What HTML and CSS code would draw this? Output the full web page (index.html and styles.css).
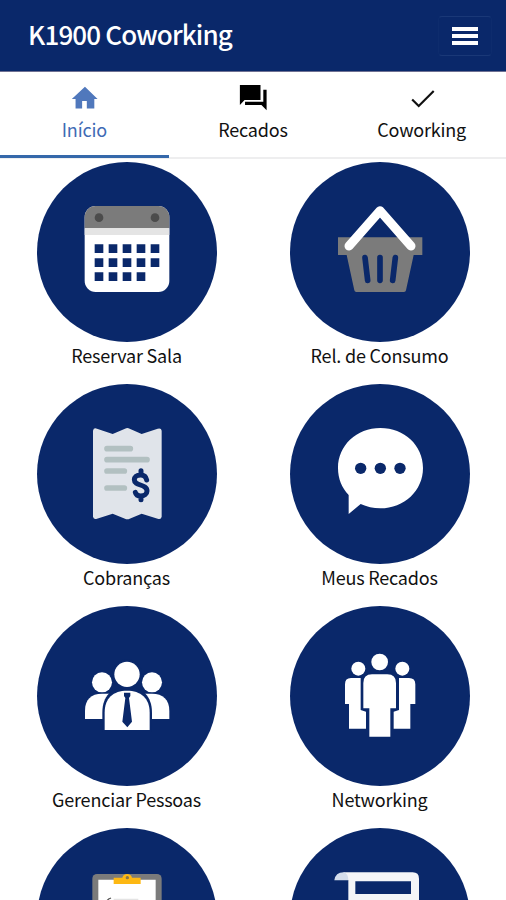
FILE: index.html
```html
<!DOCTYPE html>
<html lang="pt-BR">
<head>
<meta charset="utf-8">
<title>K1900 Coworking</title>
<link rel="stylesheet" href="styles.css">
</head>
<body>
<header class="topbar">
  <h1 class="title">K1900 Coworking</h1>
  <button class="menu" aria-label="Menu"><span class="bar"></span><span class="bar"></span><span class="bar"></span></button>
</header>
<nav class="tabs">
  <a class="tab active">
    <svg class="tab-icon" viewBox="0 0 32 32"><path fill="#5078bc" d="M14 26v-8h5v8h8V16h3.500L17 3 3 16H7v10z"/></svg>
    <span class="tab-label">Início</span>
  </a>
  <a class="tab">
    <svg class="tab-icon" viewBox="0 0 32 32"><path d="M2 1h22v16H7l-5 5.500zM27 6h3.500v22L25 22.500H7.500V19H27z"/></svg>
    <span class="tab-label">Recados</span>
  </a>
  <a class="tab">
    <svg class="tab-icon" viewBox="0 0 32 32"><path d="M5.500 16.500l7 7L28.500 7.500" fill="none" stroke="#111" stroke-width="2.300"/></svg>
    <span class="tab-label">Coworking</span>
  </a>
</nav>
<main class="grid">
  <a class="tile">
    <svg class="disc" viewBox="0 0 180 180"><g transform="translate(-7 -7) scale(.33333)">
      <rect x="164" y="153" width="254" height="258" rx="33" fill="#fff"/>
      <path d="M164 220v-34a33 33 0 0 1 33-33h188a33 33 0 0 1 33 33v34z" fill="#7b7b7b"/>
      <path d="M164 220h254v20H164z" fill="#e4e4e4"/>
      <circle cx="207" cy="188" r="13" fill="#4c4c4c"/><circle cx="375" cy="188" r="13" fill="#4c4c4c"/>
      <path fill="#0a286a" d="M194 268h26v26h-26zM236 268h26v26h-26zM278 268h26v26h-26zM320 268h26v26h-26zM362 268h26v26h-26zM194 310h26v26h-26zM236 310h26v26h-26zM278 310h26v26h-26zM320 310h26v26h-26zM362 310h26v26h-26zM194 352h26v26h-26zM236 352h26v26h-26zM278 352h26v26h-26zM320 352h26v26h-26z"/>
    </g></svg>
    <span class="label">Reservar Sala</span>
  </a>
  <a class="tile">
    <svg class="disc" viewBox="0 0 180 180"><g transform="translate(-10 -7) scale(.33333)">
      <path d="M174 247h253v53h-26l-23 106q-1 5-6 5H229q-5 0-6-5L200 300h-26z" fill="#7b7b7b"/>
      <path d="M255 308l8 68M300 308v68M346 308l-8 68" stroke="#0a286a" stroke-width="17" stroke-linecap="round"/>
      <path d="M207 273l93-106 93 106" fill="none" stroke="#fff" stroke-width="27" stroke-linecap="round" stroke-linejoin="round"/>
    </g></svg>
    <span class="label">Rel. de Consumo</span>
  </a>
  <a class="tile">
    <svg class="disc" viewBox="0 0 180 180"><g transform="translate(-7 -4) scale(.33333)">
      <path d="M189 152q2-10 12-6l47 16 37-16q7-4 14 0l36 16 48-16q11-3 12 6v258q-2 10-12 6l-48-15-36 15q-7 4-14 0l-37-15-47 15q-10 3-12-6z" fill="#e0e4ea"/>
      <path d="M231 206h70M231 239h120M231 273h52M231 324h52" stroke="#b2c0c1" stroke-width="17" stroke-linecap="round"/>
      <path d="M350 300c-2-11-9-15-18-15-13 0-19 7-19 14 0 20 38 12 38 34 0 9-8 15-19 15-9 0-14-3-16-11M333 272v13M333 348v11" fill="none" stroke="#0a286a" stroke-width="15" stroke-linecap="round" stroke-linejoin="round"/>
    </g></svg>
    <span class="label">Cobranças</span>
  </a>
  <a class="tile">
    <svg class="disc" viewBox="0 0 180 180"><g transform="translate(-10 -4) scale(.33333)">
      <path d="M301 144c72 0 128 52 128 120s-56 121-128 121c-21 0-41-5-59-13l-36 30v-57c-20-21-32-49-32-81 0-68 56-120 127-120z" fill="#fff"/>
      <g fill="#0a286a"><circle cx="242" cy="265" r="17"/><circle cx="301" cy="265" r="17"/><circle cx="360" cy="265" r="17"/></g>
    </g></svg>
    <span class="label">Meus Recados</span>
  </a>
  <a class="tile">
    <svg class="disc" viewBox="0 0 180 180"><g transform="translate(-7 -6) scale(.33333)">
      <g fill="#fff"><circle cx="216" cy="247" r="30"/><circle cx="366" cy="247" r="30"/>
      <path d="M165 357v-25c0-33 18-51 51-51h150c33 0 52 18 52 51v25z"/></g>
      <path d="M217 396v-58c0-50 28-77 74-77s75 27 75 77v58z" fill="#0a286a"/>
      <circle cx="291" cy="223" r="45" fill="#0a286a"/><circle cx="291" cy="223" r="38" fill="#fff"/>
      <path d="M224 390v-52c0-44 26-66 67-66s68 22 68 66v52z" fill="#fff"/>
      <path d="M282 278h19v10l-4 6 9 71-14 17-15-17 9-71-4-6z" fill="#0a286a"/>
    </g></svg>
    <span class="label">Gerenciar Pessoas</span>
  </a>
  <a class="tile">
    <svg class="disc" viewBox="0 0 180 180"><g transform="translate(-10 -6) scale(.33333)" fill="#fff">
      <circle cx="299" cy="186" r="25"/><circle cx="235" cy="206" r="21"/><circle cx="367" cy="206" r="21"/>
      <path d="M276 223h46q26 0 26 26v76h-17v85h-63v-85h-18v-76q0-26 26-26z"/>
      <path d="M213 234h29v96l16 5v51h-51v-74h-12v-59q0-19 18-19zM357 234h30q19 0 19 19v59h-15v74h-50v-51l16-5z"/>
    </g></svg>
    <span class="label">Networking</span>
  </a>
  <a class="tile">
    <svg class="disc" viewBox="0 0 180 180"><g transform="translate(-7 -8) scale(.33333)">
      <rect x="187" y="162" width="208" height="270" rx="14" fill="#7b7b7b"/>
      <path d="M205 179h172v235H205z" fill="#fff"/>
      <path d="M251 173h26a15 15 0 0 1 29 0h26v19h-81z" fill="#fdb813"/><circle cx="292" cy="173" r="5" fill="#8a7648"/>
      <path d="M229 244l7-7 7-3" fill="none" stroke="#555" stroke-width="4"/><path d="M251 240h74" stroke="#e4e4e4" stroke-width="7"/>
    </g></svg>
  </a>
  <a class="tile">
    <svg class="disc" viewBox="0 0 180 180"><g transform="translate(-10 -8) scale(.33333)">
      <path d="M190 157h208q19 0 19 19v240H205V181z" fill="#f4f5f8"/>
      <path d="M163 181q3-24 28-24 14 3 14 24z" fill="#d4ddec"/>
      <path d="M226 184h167v38H226z" fill="#0a286a"/>
    </g></svg>
  </a>
</main>
</body>
</html>
```
FILE: styles.css
```css
* { box-sizing: border-box; }
body {
  margin: 0;
  height: 900px;
  overflow: hidden;
  background: #fff;
  color: #111;
  font-family: "Noto Sans CJK SC", "Noto Sans", sans-serif;
}
.topbar {
  display: flex;
  align-items: center;
  justify-content: space-between;
  height: 72px;
  padding: 0 14px 0 28px;
  background: #0a286a;
  border-bottom: 1px solid #6f7193;
}
.title {
  margin: 0 0 3px;
  color: #fff;
  font-size: 26px;
  line-height: 38px;
  font-weight: 500;
  letter-spacing: -0.85px;
}
.menu {
  display: flex;
  flex-direction: column;
  align-items: center;
  justify-content: center;
  gap: 3px;
  width: 54px;
  height: 40px;
  padding: 0;
  background: transparent;
  border: 1px solid #1a3877;
  border-left-color: #0e2c6d;
  border-right-color: #0e2c6d;
  border-radius: 4px;
}
.bar { width: 26px; height: 4px; background: #fff; }
.tabs {
  display: grid;
  grid-template-columns: repeat(3, 1fr);
  height: 87px;
  border-bottom: 2px solid #eeeeef;
}
.tab {
  display: flex;
  flex-direction: column;
  align-items: center;
  height: 86px;
  padding-top: 12px;
}
.active { color: #3f6bb5; border-bottom: 3px solid #3568aa; }
.tab-icon { width: 30px; height: 30px; flex: none; }
.tab-label { font-size: 18px; line-height: 26px; margin-top: 2px; letter-spacing: -0.2px; }
.grid {
  display: grid;
  grid-template-columns: 1fr 1fr;
  grid-template-rows: repeat(3, 222px) 72px;
  height: 741px;
  padding-top: 3px;
  overflow: hidden;
}
.tile { display: flex; flex-direction: column; align-items: center; overflow: hidden; }
.disc { width: 180px; height: 180px; flex: none; border-radius: 50%; background: #0a286a; }
.label { font-size: 18px; line-height: 26px; letter-spacing: -0.2px; }
```
